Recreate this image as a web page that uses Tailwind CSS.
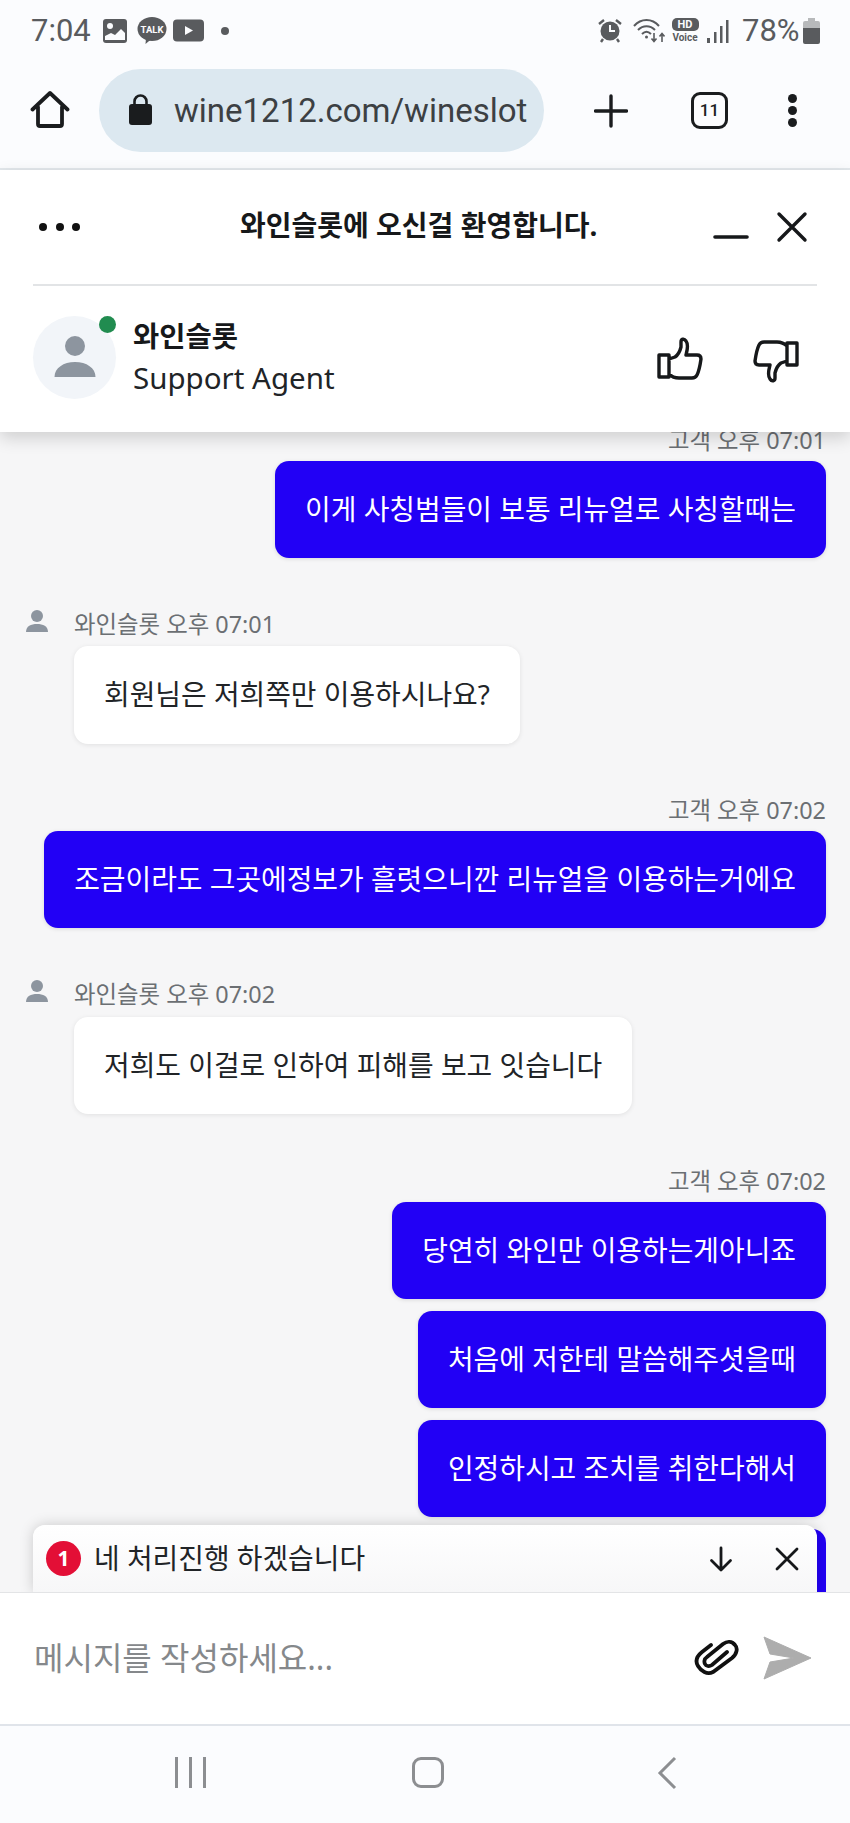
<!DOCTYPE html>
<html lang="ko">
<head>
<meta charset="utf-8">
<script src="https://cdn.jsdelivr.net/npm/@tailwindcss/browser@4"></script>
<title>wine1212</title>
</head>
<body class="m-0 bg-[#fbfcfe]">
<div class="w-[850px] h-[1823px] flex flex-col overflow-hidden font-['Noto_Sans','Noto_Sans_CJK_KR',sans-serif]">
  <!-- status bar -->
  <div class="h-[60px] shrink-0 bg-[#fbfcfe] flex items-center justify-between pl-[31px] pr-[30px] pt-[1px] text-[#595b5e] font-['Roboto',sans-serif]">
    <div class="flex items-center">
      <span class="text-[31px] leading-none w-[71px]">7:04</span>
      <svg class="w-[26px] h-[26px]" viewBox="0 0 26 26"><rect x="1" y="1" width="24" height="24" rx="3" fill="#595b5e"/><circle cx="8" cy="8" r="3" fill="#fbfcfe"/><path d="M3 22v-4l6-3 4 2 6-6 4 4v7z" fill="#fbfcfe"/></svg>
      <svg class="w-[30px] h-[28px] ml-[9px]" viewBox="0 0 30 28"><ellipse cx="15" cy="12" rx="14.500" ry="12" fill="#595b5e"/><path d="M9 21l-0.500 6 6-5z" fill="#595b5e"/><text x="15" y="15.500" text-anchor="middle" font-size="9.500" font-weight="700" fill="#fbfcfe" font-family="Roboto">TALK</text></svg>
      <svg class="w-[31px] h-[23px] ml-[6px]" viewBox="0 0 31 23"><rect width="31" height="22" rx="4" y="0.500" fill="#595b5e"/><path d="M12 7l8 4.500-8 4.500z" fill="#fbfcfe"/></svg>
      <span class="w-[8px] h-[8px] rounded-full bg-[#595b5e] ml-[17px]"></span>
    </div>
    <div class="flex items-center">
      <svg class="w-[24px] h-[25px]" viewBox="0 0 24 25"><circle cx="12" cy="13" r="9.500" fill="#595b5e"/><path d="M12 7v6h5" stroke="#fbfcfe" stroke-width="2" fill="none"/><path d="M1 6l5-4M23 6l-5-4M5 21l-2 3M19 21l2 3" stroke="#595b5e" stroke-width="2.400" fill="none"/></svg>
      <svg class="w-[32px] h-[26px] ml-[11px]" viewBox="0 0 32 26"><path d="M1 8c7-8 18-8 25 0M5 12c5-5 12-5 17 0M9 16c3-3 6-3 9 0" stroke="#595b5e" stroke-width="2" fill="none"/><circle cx="13.500" cy="19" r="1.500" fill="#595b5e"/><path d="M21 15v8m-2.500-2.500l2.500 3 2.500-3M29 24v-8m-2.500 2.500l2.500-3 2.500 3" stroke="#595b5e" stroke-width="1.600" fill="none"/></svg>
      <div class="w-[28px] ml-[6px] flex flex-col items-center">
        <span class="w-[27px] h-[13px] rounded-[5px] bg-[#595b5e] text-[#fbfcfe] text-[11px] leading-[13px] font-bold text-center">HD</span>
        <span class="text-[10px] leading-[11px] font-bold mt-[1px]">Voice</span>
      </div>
      <svg class="w-[22px] h-[24px] ml-[8px]" viewBox="0 0 22 24"><rect x="0" y="19" width="3" height="5" fill="#595b5e"/><rect x="7" y="13" width="2.500" height="11" fill="#595b5e"/><rect x="13" y="7" width="2.500" height="17" fill="#595b5e"/><rect x="19" y="1" width="2.500" height="23" fill="#595b5e"/></svg>
      <span class="text-[31px] leading-none ml-[13px] w-[55px] whitespace-nowrap">78%</span>
      <svg class="w-[17px] h-[26px] ml-[6px]" viewBox="0 0 17 26"><path d="M5 0h7v3h3a2 2 0 0 1 2 2v5H0V5a2 2 0 0 1 2-2h3z" fill="#b7b9bb"/><path d="M0 10h17v14a2 2 0 0 1-2 2H2a2 2 0 0 1-2-2z" fill="#595b5e"/></svg>
    </div>
  </div>
  <!-- browser bar -->
  <div class="h-[110px] shrink-0 bg-[#fbfcfe] border-b-2 border-[#e3e8ec] flex items-start pl-[30px] pt-[9px]">
    <svg class="w-[40px] h-[40px] mt-[21px]" viewBox="0 0 40 40"><path d="M2.500 19.500L20 3l17.500 16.500M8 17v17a2 2 0 0 0 2 2h20a2 2 0 0 0 2-2V17" stroke="#1a1c1e" stroke-width="3.800" fill="none" stroke-linejoin="round" stroke-linecap="round"/></svg>
    <div class="ml-[29px] w-[445px] h-[83px] shrink-0 rounded-full bg-[#dce8f0] flex items-center pl-[30px] font-['Roboto',sans-serif]">
      <svg class="w-[23px] h-[31px] mt-[-3px]" viewBox="0 0 23 31"><path d="M5.500 11V7.500a6 6 0 0 1 12 0V11" stroke="#1a1c1e" stroke-width="2.600" fill="none"/><rect y="10" width="23" height="21" rx="3" fill="#1a1c1e"/></svg>
      <span class="ml-[22px] text-[33px] leading-none text-[#3c4043] whitespace-nowrap">wine1212.com/wineslot</span>
    </div>
    <svg class="w-[34px] h-[34px] ml-[50px] mt-[25px]" viewBox="0 0 34 34"><path d="M17 2v30M1.500 17h31" stroke="#1a1c1e" stroke-width="3.400" stroke-linecap="round"/></svg>
    <div class="ml-[63px] mt-[23px] w-[37px] h-[37px] rounded-[9px] border-[3.500px] border-[#1a1c1e] flex items-center justify-center text-[17px] font-medium text-[#1a1c1e] font-['Roboto',sans-serif]">11</div>
    <div class="ml-[60px] mt-[25px] flex flex-col gap-[3px]">
      <span class="w-[9px] h-[9px] rounded-full bg-[#1a1c1e]"></span>
      <span class="w-[9px] h-[9px] rounded-full bg-[#1a1c1e]"></span>
      <span class="w-[9px] h-[9px] rounded-full bg-[#1a1c1e]"></span>
    </div>
  </div>
  <!-- chat header -->
  <div class="h-[262px] shrink-0 bg-white relative z-10 shadow-[0_6px_16px_rgba(0,0,0,0.16)] px-[33px]">
    <div class="h-[116px] border-b-2 border-[#e2e4e6] flex items-start pt-[12px]">
      <div class="flex gap-[8.500px] pl-[6px] pt-[41px] shrink-0">
        <span class="w-[8px] h-[8px] rounded-full bg-[#111]"></span>
        <span class="w-[8px] h-[8px] rounded-full bg-[#111]"></span>
        <span class="w-[8px] h-[8px] rounded-full bg-[#111]"></span>
      </div>
      <span class="ml-[160px] mt-[18px] text-[28px] font-bold leading-[50px] text-[#16181a] w-[473px] shrink-0 whitespace-nowrap">와인슬롯에 오신걸 환영합니다.</span>
      <svg class="w-[36px] h-[8px] mt-[51px] shrink-0" viewBox="0 0 36 8"><path d="M2 4h32" stroke="#16181a" stroke-width="3.600" stroke-linecap="round"/></svg>
      <svg class="w-[32px] h-[32px] ml-[27px] mt-[29px] shrink-0" viewBox="0 0 32 32"><path d="M3 3l26 26M29 3L3 29" stroke="#16181a" stroke-width="3.400" stroke-linecap="round"/></svg>
    </div>
    <div class="flex items-start pt-[30px]">
      <div class="relative w-[83px] h-[83px] rounded-full bg-[#f2f5f9] shrink-0 flex items-center justify-center">
        <svg class="w-[42px] h-[42px] mt-[-1px]" viewBox="0 0 42 42"><circle cx="21" cy="10" r="10" fill="#8d959f"/><path d="M0.500 41c0-9 9-15 20.500-15s20.500 6 20.500 15z" fill="#8d959f"/></svg>
        <span class="absolute left-[66px] top-0 w-[17px] h-[17px] rounded-full bg-[#218c50]"></span>
      </div>
      <div class="ml-[17px] pt-[1px]">
        <div class="text-[28.500px] font-bold leading-[38px] text-[#16181a]">와인슬롯</div>
        <div class="text-[29.500px] leading-[46px] text-[#212427]">Support Agent</div>
      </div>
      <svg class="w-[46px] h-[44px] ml-auto mt-[21px]" viewBox="0 0 46 44"><path d="M2 18h10v22H2zM12 22l6-2c3-2 5-6 6-10V5c0-3 3-4 5-1 3 4 1 10 0 14h11c3 0 4 2 4 4-1 7-2 12-4 16-1 2-3 3-5 3H22c-4 0-7-1-10-4" stroke="#16181a" stroke-width="3.400" fill="none" stroke-linejoin="round"/></svg>
      <svg class="w-[46px] h-[44px] ml-[50px] mr-[18px] mt-[23px]" viewBox="0 0 46 44"><path transform="rotate(180 23 22)" d="M2 18h10v22H2zM12 22l6-2c3-2 5-6 6-10V5c0-3 3-4 5-1 3 4 1 10 0 14h11c3 0 4 2 4 4-1 7-2 12-4 16-1 2-3 3-5 3H22c-4 0-7-1-10-4" stroke="#16181a" stroke-width="3.400" fill="none" stroke-linejoin="round"/></svg>
    </div>
  </div>
  <!-- messages -->
  <div class="flex-1 relative bg-[#f6f6f7] overflow-hidden min-h-0">
    <div class="flex flex-col mt-[-8px] pl-[25px] pr-[24px] text-[27.900px]">
      <div class="text-right text-[23.400px] leading-[33px] mb-[4px] text-[#6b6f73]">고객 오후 07:01</div>
      <div class="self-end h-[97px] px-[30px] flex items-center rounded-[14px] bg-[#2200f5] text-white shadow-[0_1px_4px_rgba(0,0,0,0.12)] whitespace-nowrap">이게 사칭범들이 보통 리뉴얼로 사칭할때는</div>

      <div class="flex items-center h-[36px] mt-[49px] text-[23.400px] text-[#6b6f73]">
        <svg class="w-[24px] h-[24px] mr-[25px] mt-[-8px]" viewBox="0 0 24 24"><circle cx="12" cy="7" r="6" fill="#8d959f"/><path d="M1 23c0-6 5-8 11-8s11 2 11 8z" fill="#8d959f"/></svg>
        와인슬롯 오후 07:01
      </div>
      <div class="self-start ml-[49px] h-[98px] px-[30px] flex items-center rounded-[14px] bg-white text-[#212427] shadow-[0_1px_5px_rgba(0,0,0,0.09)] whitespace-nowrap mt-[3px]">회원님은 저희쪽만 이용하시나요?</div>

      <div class="text-right text-[23.400px] leading-[36px] text-[#6b6f73] mt-[48px]">고객 오후 07:02</div>
      <div class="self-end h-[97px] px-[30px] flex items-center rounded-[14px] bg-[#2200f5] text-white shadow-[0_1px_4px_rgba(0,0,0,0.12)] whitespace-nowrap mt-[3px]">조금이라도 그곳에정보가 흘렷으니깐 리뉴얼을 이용하는거에요</div>

      <div class="flex items-center h-[36px] mt-[49px] text-[23.400px] text-[#6b6f73]">
        <svg class="w-[24px] h-[24px] mr-[25px] mt-[-8px]" viewBox="0 0 24 24"><circle cx="12" cy="7" r="6" fill="#8d959f"/><path d="M1 23c0-6 5-8 11-8s11 2 11 8z" fill="#8d959f"/></svg>
        와인슬롯 오후 07:02
      </div>
      <div class="self-start ml-[49px] h-[97px] px-[30px] flex items-center rounded-[14px] bg-white text-[#212427] shadow-[0_1px_5px_rgba(0,0,0,0.09)] whitespace-nowrap mt-[4px]">저희도 이걸로 인하여 피해를 보고 잇습니다</div>

      <div class="text-right text-[23.400px] leading-[36px] text-[#6b6f73] mt-[49px]">고객 오후 07:02</div>
      <div class="self-end h-[97px] px-[30px] flex items-center rounded-[14px] bg-[#2200f5] text-white shadow-[0_1px_4px_rgba(0,0,0,0.12)] whitespace-nowrap mt-[3px]">당연히 와인만 이용하는게아니죠</div>
      <div class="self-end h-[97px] px-[30px] flex items-center rounded-[14px] bg-[#2200f5] text-white shadow-[0_1px_4px_rgba(0,0,0,0.12)] whitespace-nowrap mt-[12px]">처음에 저한테 말씀해주셧을때</div>
      <div class="self-end h-[97px] px-[30px] flex items-center rounded-[14px] bg-[#2200f5] text-white shadow-[0_1px_4px_rgba(0,0,0,0.12)] whitespace-nowrap mt-[12px]">인정하시고 조치를 취한다해서</div>
      <div class="self-end h-[97px] w-[500px] rounded-[14px] bg-[#2200f5] mt-[12px]"></div>
    </div>
    <!-- new message notice overlaps the list -->
    <div class="absolute left-[33px] right-[33px] bottom-0 h-[67px] rounded-t-[12px] bg-gradient-to-b from-white to-[#f7f7f8] shadow-[0_0_14px_rgba(0,0,0,0.18)] flex items-center pl-[13px] text-[#212427]">
      <span class="w-[35px] h-[35px] rounded-full bg-[#e30f36] text-white text-[21px] font-bold flex items-center justify-center">1</span>
      <span class="ml-[13px] text-[27.900px] leading-none whitespace-nowrap">네 처리진행 하겠습니다</span>
      <svg class="w-[24px] h-[26px] ml-auto" viewBox="0 0 24 26"><path d="M12 2v22M2.500 14.500L12 24l9.500-9.500" stroke="#16181a" stroke-width="2.800" fill="none" stroke-linecap="round" stroke-linejoin="round"/></svg>
      <svg class="w-[24px] h-[24px] ml-[42px] mr-[18px]" viewBox="0 0 24 24"><path d="M2 2l20 20M22 2L2 22" stroke="#16181a" stroke-width="2.800" stroke-linecap="round"/></svg>
    </div>
  </div>
  <!-- input -->
  <div class="h-[134px] shrink-0 bg-white border-t border-[#e3e4e6] border-b-2 border-b-[#e0e4ea] flex items-center pl-[34px]">
    <span class="text-[32px] text-[#85888b] leading-none mt-[-2px] whitespace-nowrap">메시지를 작성하세요...</span>
    <svg class="w-[46px] h-[40px] ml-auto mt-[-1px]" viewBox="0 0 46 40"><path d="M17 7L8 14c-5 4-7 9-4 14 3 5 9 9 15 6L38 20c5-4 6-10 3-13-3-4-8-4-12-1L13 19c-3 2-3 5-2 7s4 3 7 1L33 14" stroke="#111" stroke-width="3.800" fill="none" stroke-linecap="round"/></svg>
    <svg class="w-[48px] h-[44px] ml-[23px] mr-[39px] mt-[-2px]" viewBox="0 0 48 44"><path d="M1 1l47 21L1 43l6-17 24-4-24-4z" fill="#adadad" stroke="#adadad" stroke-linejoin="round"/></svg>
  </div>
  <!-- nav -->
  <div class="h-[97px] shrink-0 bg-[#fbfcfe] flex items-start pt-[30px] pl-[175px]">
    <div class="flex gap-[11px] mt-[1px]">
      <span class="w-[3px] h-[31px] bg-[#8c8e91]"></span>
      <span class="w-[3px] h-[31px] bg-[#8c8e91]"></span>
      <span class="w-[3px] h-[31px] bg-[#8c8e91]"></span>
    </div>
    <span class="ml-[206px] mt-[1px] w-[32px] h-[31px] rounded-[9px] border-[3px] border-[#8c8e91]"></span>
    <svg class="w-[20px] h-[34px] ml-[213px]" viewBox="0 0 20 34"><path d="M18 2L3 17l15 15" stroke="#8c8e91" stroke-width="3" fill="none"/></svg>
  </div>
</div>
</body>
</html>
